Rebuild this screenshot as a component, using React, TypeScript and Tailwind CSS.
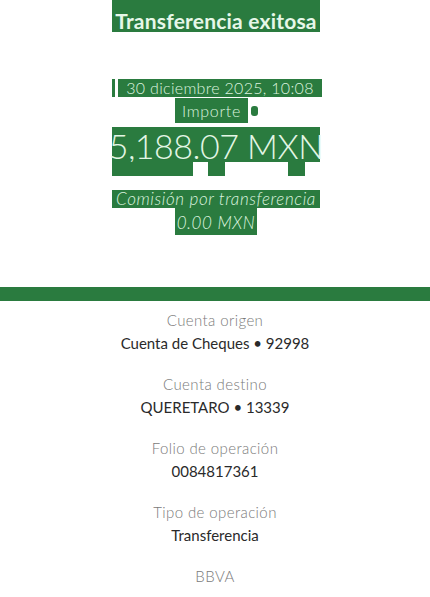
import React from "react";

const details = [
  { label: "Cuenta origen", value: "Cuenta de Cheques • 92998" },
  { label: "Cuenta destino", value: "QUERETARO • 13339" },
  { label: "Folio de operación", value: "0084817361" },
  { label: "Tipo de operación", value: "Transferencia" },
  { label: "BBVA", value: "" },
];

export default function App() {
  return (
    <div className="w-[430px] h-[597px] bg-white overflow-hidden text-center font-['Lato','Open_Sans',sans-serif]">
      {/* highlighted header block */}
      <div className="flex flex-col">
        <div className="ml-[112px] w-[208px] h-[32px] bg-[#2a7b3f] flex items-end justify-center">
          <span className="text-[21px] leading-[22px] font-bold tracking-[0.2px] text-[#e6f7e8] whitespace-nowrap">Transferencia exitosa</span>
        </div>

        <div className="mt-[47px] ml-[112px] flex items-center gap-[3px]">
          <div className="w-[3px] h-[18px] bg-[#2a7b3f]" />
          <div className="w-[204px] h-[18px] bg-[#2a7b3f] flex items-center justify-center">
            <span className="text-[16px] leading-[18px] font-light tracking-[0.3px] text-[#dcf3df] whitespace-nowrap">30 diciembre 2025, 10:08</span>
          </div>
        </div>
        <div className="mt-[1px] ml-[175px] flex items-center gap-[3px]">
          <div className="w-[73px] h-[25px] bg-[#2a7b3f] flex items-center justify-center">
            <span className="text-[16px] leading-[18px] font-light tracking-[0.7px] text-[#dcf3df]">Importe</span>
          </div>
          <div className="w-[7px] h-[10px] rounded-[3px] bg-[#2a7b3f]" />
        </div>

        <div className="mt-[4px] ml-[112px] w-[208px] h-[35px] bg-[#2a7b3f] flex items-end justify-center">
          <span className="text-[34px] leading-[40px] -mb-[4px] font-light tracking-[-0.5px] text-[#e3f6e5] whitespace-nowrap">5,188.07 MXN</span>
        </div>
        <div className="ml-[112px] w-[208px] h-[14px] flex">
          <div className="w-[81px] bg-[#2a7b3f]" />
          <div className="ml-[15px] w-[17px] bg-[#2a7b3f]" />
          <div className="ml-[63px] w-[17px] bg-[#2a7b3f]" />
        </div>

        <div className="mt-[14px] ml-[112px] w-[208px] h-[18px] bg-[#2a7b3f] flex items-center justify-center">
          <span className="text-[17px] leading-[18px] font-light italic tracking-[0.6px] text-[#dcf3df] whitespace-nowrap">Comisión por transferencia</span>
        </div>
        <div className="ml-[175px] w-[82px] h-[27px] bg-[#2a7b3f] flex items-start justify-center pt-[5px]">
          <span className="text-[17px] leading-[20px] font-light italic tracking-[0.6px] text-[#dcf3df]">0.00 MXN</span>
        </div>
      </div>

      <div className="mt-[52px] h-[14px] bg-[#2a7b3f]" />

      <div className="flex flex-col pt-[10px] gap-[22px]">
        {details.map((d) => (
          <div key={d.label} className="flex flex-col items-center gap-[4px]">
            <span className="text-[15px] leading-[19px] font-light tracking-[0.4px] text-[#7a7a7a]">{d.label}</span>
            {d.value && <span className="text-[15px] leading-[19px] text-[#2a2a2a]">{d.value}</span>}
          </div>
        ))}
      </div>
    </div>
  );
}
